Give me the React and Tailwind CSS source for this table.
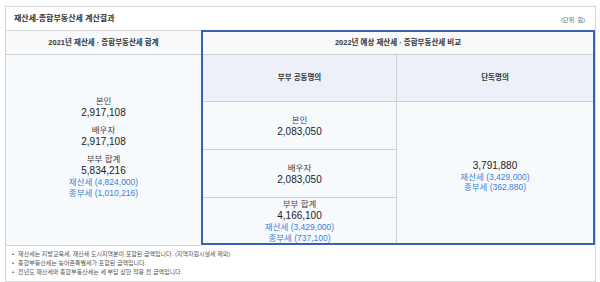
import React from 'react';

const font = { fontFamily: '"Liberation Sans", "Noto Sans CJK KR", sans-serif' };

const notes = [
  '재산세는 지방교육세, 재산세 도시지역분이 포함된 금액입니다. (지역자원시설세 제외)',
  '종합부동산세는 농어촌특별세가 포함된 금액입니다.',
  '전년도 재산세와 종합부동산세는 세 부담 상한 적용 전 금액입니다.',
];

function Amount({ label, value }) {
  return (
    <div className="flex flex-col items-center">
      <span className="text-[8.5px] leading-[12px] text-[#444]">{label}</span>
      <span className="text-[10px] leading-[12px] text-[#222]">{value}</span>
    </div>
  );
}

function Blue({ children }) {
  return <span className="text-[8.5px] leading-[10.5px] text-[#3d7fd6]">{children}</span>;
}

export default function App() {
  return (
    <div className="w-[600px] h-[282px] bg-white pt-[6px] pl-[5px]" style={font}>
      <div className="w-[591px] border border-[#d6d6d6] bg-white">
        {/* title */}
        <div className="h-[24px] border-b border-[#d6d6d6] flex items-center justify-between pl-[8px] pr-[10px]">
          <span className="text-[8px] font-bold text-[#333]">재산세-종합부동산세 계산결과</span>
          <span className="text-[6px] text-[#666] pt-[4px]">(단위: 원)</span>
        </div>

        <div className="flex">
          {/* 2021 */}
          <div className="w-[195px] flex flex-col border-b border-[#d6d6d6]">
            <div className="h-[24px] border-b border-[#cfcfcf] bg-[#f8fafc] flex items-center justify-center">
              <span className="text-[7.5px] font-bold text-[#333]">2021년 재산세 · 종합부동산세 합계</span>
            </div>
            <div className="h-[190px] bg-[#f7fafd] flex flex-col items-center justify-center gap-[5px] pb-[7px]">
              <Amount label="본인" value="2,917,108" />
              <Amount label="배우자" value="2,917,108" />
              <div className="flex flex-col items-center">
                <Amount label="부부 합계" value="5,834,216" />
                <Blue>재산세 (4,824,000)</Blue>
                <Blue>종부세 (1,010,216)</Blue>
              </div>
            </div>
          </div>

          {/* 2022 */}
          <div className="w-[394px] h-[215px] border-[2px] border-[#3a5fb3] -mt-[1px] flex flex-col">
            <div className="h-[23px] border-b border-[#cfcfcf] bg-[#f8fafc] flex items-center justify-center">
              <span className="text-[7.5px] font-bold text-[#333]">2022년 예상 재산세 · 종합부동산세 비교</span>
            </div>
            <div className="flex h-[47px] border-b border-[#cfcfcf] bg-[#edf0f8]">
              <div className="w-[194px] border-r border-[#cfcfcf] flex items-center justify-center">
                <span className="text-[7.5px] font-bold text-[#333]">부부 공동명의</span>
              </div>
              <div className="flex-1 flex items-center justify-center">
                <span className="text-[7.5px] font-bold text-[#333]">단독명의</span>
              </div>
            </div>
            <div className="flex flex-1 bg-[#f7fafd]">
              <div className="w-[194px] border-r border-[#cfcfcf] flex flex-col">
                <div className="h-[48px] border-b border-[#cfcfcf] flex items-center justify-center">
                  <Amount label="본인" value="2,083,050" />
                </div>
                <div className="h-[48px] border-b border-[#cfcfcf] flex items-center justify-center">
                  <Amount label="배우자" value="2,083,050" />
                </div>
                <div className="flex-1 flex flex-col items-center justify-center">
                  <Amount label="부부 합계" value="4,166,100" />
                  <Blue>재산세 (3,429,000)</Blue>
                  <Blue>종부세 (737,100)</Blue>
                </div>
              </div>
              <div className="flex-1 flex flex-col items-center justify-center pt-[7px]">
                <span className="text-[10px] leading-[12px] text-[#222]">3,791,880</span>
                <Blue>재산세 (3,429,000)</Blue>
                <Blue>종부세 (362,880)</Blue>
              </div>
            </div>
          </div>
        </div>

        {/* notes */}
        <ul className="pt-[4px] pb-[4px] pl-[6px]">
          {notes.map((n) => (
            <li key={n} className="flex items-center gap-[4px] text-[6px] leading-[9px] text-[#555]">
              <span>•</span>
              <span>{n}</span>
            </li>
          ))}
        </ul>
      </div>
    </div>
  );
}
